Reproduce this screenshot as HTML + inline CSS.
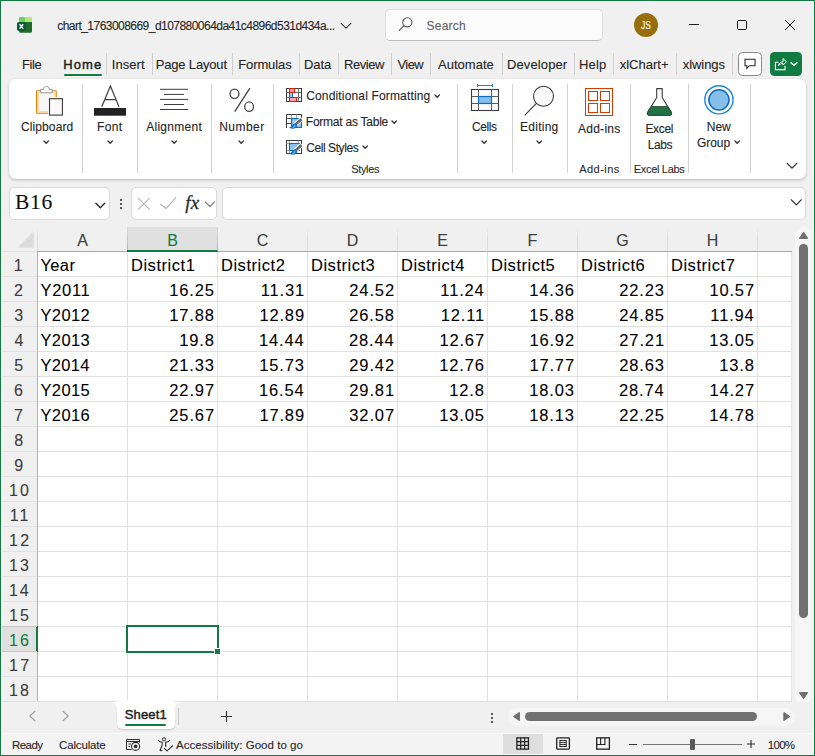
<!DOCTYPE html>
<html><head><meta charset="utf-8"><title>Excel</title>
<style>
html,body{margin:0;padding:0;}
body{width:815px;height:756px;position:relative;overflow:hidden;background:#f0f0f0;font-family:"Liberation Sans",sans-serif;}
#win{position:absolute;left:0;top:0;width:815px;height:756px;box-sizing:border-box;border:1px solid #107c41;box-shadow:inset 0 0 0 1px #f9f9f9;}
.t{position:absolute;white-space:pre;display:block;-webkit-text-stroke:0.1px currentColor;}
.b{position:absolute;display:block;}
</style></head><body>
<svg class="b" style="left:16px;top:16px" width="18" height="18" viewBox="0 0 18 18">
<rect x="3" y="1" width="6.2" height="5.5" rx="1" fill="#6dd162"/>
<rect x="9" y="1" width="7" height="5.5" rx="1" fill="#b2ea76"/>
<path d="M3 6 H16 V15.3 a1.5 1.5 0 0 1 -1.5 1.5 H4.5 a1.5 1.5 0 0 1 -1.5 -1.5 Z" fill="#1f6b2c"/>
<path d="M3 6 H9.2 V15 H3 Z" fill="#175c2a"/>
<rect x="1" y="5.9" width="8.8" height="8.9" rx="1.6" fill="#0f5a34"/>
<path d="M3.6 8.3 L7.2 12.6 M7.2 8.3 L3.6 12.6" stroke="#fff" stroke-width="1.4"/>
</svg>
<span class="t" style="left:57.22px;top:19px;font-size:12px;line-height:14px;letter-spacing:-0.535px;color:#242424;">chart_1763008669_d107880064da41c4896d531d434a...</span>
<svg class="b" style="left:339.7px;top:21px" width="12" height="10" viewBox="0 0 12 10"><path d="M1.1 2.3 L6 7.2 L10.9 2.3" fill="none" stroke="#333" stroke-width="1.1" stroke-linecap="round" stroke-linejoin="round"/></svg>
<div class="b" style="left:385px;top:9.4px;width:217.60px;height:31.20px;background:#fbfbfb;border:1px solid #dedede;border-bottom-color:#bcbcbc;border-radius:5px;box-sizing:border-box;"></div>
<svg class="b" style="left:398.1px;top:16.2px" width="16" height="16" viewBox="0 0 16 16"><circle cx="9.3" cy="6.3" r="4.6" fill="none" stroke="#555" stroke-width="1.1"/><path d="M6 9.6 L1.3 14.3" stroke="#555" stroke-width="1.2" stroke-linecap="round"/></svg>
<span class="t" style="left:426.46px;top:19px;font-size:12px;line-height:14px;letter-spacing:0.256px;color:#616161;">Search</span>
<div class="b" style="left:633.9px;top:12.8px;width:24.20px;height:24.20px;background:#966e0d;border-radius:50%;"></div>
<span class="t" style="left:640.80px;top:19px;font-size:11px;line-height:12px;letter-spacing:0.000px;color:#fff;transform:scaleX(0.76);transform-origin:0 0;">JS</span>
<svg class="b" style="left:688px;top:19px" width="12" height="12" viewBox="0 0 12 12"><path d="M1 5.5 H11" stroke="#1a1a1a" stroke-width="1"/></svg>
<svg class="b" style="left:736px;top:19px" width="12" height="12" viewBox="0 0 12 12"><rect x="1.5" y="1.5" width="9" height="9" rx="1.2" fill="none" stroke="#1a1a1a" stroke-width="1"/></svg>
<svg class="b" style="left:784px;top:19px" width="12" height="12" viewBox="0 0 12 12"><path d="M1 1 L11 11 M11 1 L1 11" stroke="#1a1a1a" stroke-width="1"/></svg>
<span class="t" style="left:21.96px;top:57px;font-size:13px;line-height:15px;letter-spacing:-0.373px;color:#242424;">File</span>
<span class="t" style="left:63.26px;top:57px;font-size:13px;line-height:15px;letter-spacing:1.105px;color:#1f1f1f;-webkit-text-stroke:0.45px #1f1f1f;">Home</span>
<span class="t" style="left:111.83px;top:57px;font-size:13px;line-height:15px;letter-spacing:0.034px;color:#242424;">Insert</span>
<span class="t" style="left:155.71px;top:57px;font-size:13px;line-height:15px;letter-spacing:-0.170px;color:#242424;">Page Layout</span>
<span class="t" style="left:238.21px;top:57px;font-size:13px;line-height:15px;letter-spacing:-0.102px;color:#242424;">Formulas</span>
<span class="t" style="left:303.96px;top:57px;font-size:13px;line-height:15px;letter-spacing:-0.068px;color:#242424;">Data</span>
<span class="t" style="left:343.96px;top:57px;font-size:13px;line-height:15px;letter-spacing:-0.420px;color:#242424;">Review</span>
<span class="t" style="left:397.50px;top:57px;font-size:13px;line-height:15px;letter-spacing:-0.567px;color:#242424;">View</span>
<span class="t" style="left:438.00px;top:57px;font-size:13px;line-height:15px;letter-spacing:0.019px;color:#242424;">Automate</span>
<span class="t" style="left:506.96px;top:57px;font-size:13px;line-height:15px;letter-spacing:0.119px;color:#242424;">Developer</span>
<span class="t" style="left:578.96px;top:57px;font-size:13px;line-height:15px;letter-spacing:0.215px;color:#242424;">Help</span>
<span class="t" style="left:619.67px;top:57px;font-size:13px;line-height:15px;letter-spacing:0.024px;color:#242424;">xlChart+</span>
<span class="t" style="left:682.87px;top:57px;font-size:13px;line-height:15px;letter-spacing:-0.092px;color:#242424;">xlwings</span>
<div class="b" style="left:105.75px;top:52.5px;width:1.00px;height:22.00px;background:#cfcfcf;"></div>
<div class="b" style="left:151.5px;top:52.5px;width:1.00px;height:22.00px;background:#cfcfcf;"></div>
<div class="b" style="left:232.0px;top:52.5px;width:1.00px;height:22.00px;background:#cfcfcf;"></div>
<div class="b" style="left:298.75px;top:52.5px;width:1.00px;height:22.00px;background:#cfcfcf;"></div>
<div class="b" style="left:337.75px;top:52.5px;width:1.00px;height:22.00px;background:#cfcfcf;"></div>
<div class="b" style="left:390.75px;top:52.5px;width:1.00px;height:22.00px;background:#cfcfcf;"></div>
<div class="b" style="left:430.0px;top:52.5px;width:1.00px;height:22.00px;background:#cfcfcf;"></div>
<div class="b" style="left:501.5px;top:52.5px;width:1.00px;height:22.00px;background:#cfcfcf;"></div>
<div class="b" style="left:573.75px;top:52.5px;width:1.00px;height:22.00px;background:#cfcfcf;"></div>
<div class="b" style="left:612.7px;top:52.5px;width:1.00px;height:22.00px;background:#cfcfcf;"></div>
<div class="b" style="left:676.0px;top:52.5px;width:1.00px;height:22.00px;background:#cfcfcf;"></div>
<div class="b" style="left:732.0px;top:52.5px;width:1.00px;height:22.00px;background:#cfcfcf;"></div>
<div class="b" style="left:64px;top:73.6px;width:37.50px;height:2.00px;background:#107c41;border-radius:1px;"></div>
<div class="b" style="left:738.1px;top:51.9px;width:23.60px;height:23.80px;background:#fff;border:1px solid #8a8a8a;border-radius:4.5px;box-sizing:border-box;"></div>
<svg class="b" style="left:743px;top:57px" width="14" height="14" viewBox="0 0 14 14"><path d="M2 2.3 H12 V8.7 H6.3 L3.9 11.3 V8.7 H2 Z" fill="none" stroke="#242424" stroke-width="1.05" stroke-linejoin="miter"/></svg>
<div class="b" style="left:770px;top:52px;width:32.00px;height:23.60px;background:#107c41;border-radius:4.5px;"></div>
<svg class="b" style="left:774px;top:56px" width="16" height="16" viewBox="0 0 16 16"><path d="M4.4 6.3 H1.4 V13.6 H11 V9.8" fill="none" stroke="#fff" stroke-width="1.1" stroke-linejoin="miter"/><path d="M4.2 10 C4.6 7.3 6.6 5.9 9 5.8 V2.6 L12.5 5.8 L9 9 V7.5 C7 7.5 5.4 8.2 4.2 10 Z" fill="none" stroke="#fff" stroke-width="1" stroke-linejoin="round"/></svg>
<svg class="b" style="left:790.4px;top:61.4px" width="8" height="6" viewBox="0 0 8 6"><path d="M1.1 1.7 L4 4.3 L6.9 1.7" fill="none" stroke="#fff" stroke-width="1.5" stroke-linecap="round" stroke-linejoin="round"/></svg>
<div class="b" style="left:9px;top:78.7px;width:797.00px;height:100.00px;background:#fff;border-radius:6.5px;box-shadow:0 1px 2.6px rgba(0,0,0,0.24);"></div>
<div class="b" style="left:82.0px;top:83.7px;width:1.00px;height:88.90px;background:#d1d1d1;"></div>
<div class="b" style="left:136.9px;top:83.7px;width:1.00px;height:88.90px;background:#d1d1d1;"></div>
<div class="b" style="left:211.0px;top:83.7px;width:1.00px;height:88.90px;background:#d1d1d1;"></div>
<div class="b" style="left:273.0px;top:83.7px;width:1.00px;height:88.90px;background:#d1d1d1;"></div>
<div class="b" style="left:457.1px;top:83.7px;width:1.00px;height:88.90px;background:#d1d1d1;"></div>
<div class="b" style="left:512.1px;top:83.7px;width:1.00px;height:88.90px;background:#d1d1d1;"></div>
<div class="b" style="left:566.8px;top:83.7px;width:1.00px;height:88.90px;background:#d1d1d1;"></div>
<div class="b" style="left:750.0px;top:83.7px;width:1.00px;height:88.90px;background:#d1d1d1;"></div>
<div class="b" style="left:630.4px;top:83.7px;width:1.00px;height:88.90px;background:#d1d1d1;"></div>
<div class="b" style="left:688.1px;top:83.7px;width:1.00px;height:88.90px;background:#d1d1d1;"></div>
<svg class="b" style="left:35px;top:85px" width="30" height="32" viewBox="0 0 30 32">
<rect x="1.6" y="5.7" width="19.6" height="22.5" rx="0.8" fill="#f7f7f7" stroke="#e07a00" stroke-width="1.1"/>
<rect x="2.9" y="7" width="17" height="19.9" fill="none" stroke="#fbd599" stroke-width="1.5"/>
<path d="M5.7 7.8 V4.4 H8.6 C8.6 2.4 10 1.4 11.4 1.4 C12.8 1.4 14.2 2.4 14.2 4.4 H17.1 V7.8 Z" fill="#fff" stroke="#8a8a8a" stroke-width="0.9" stroke-linejoin="round"/>
<rect x="13.2" y="12.4" width="15.6" height="19" fill="#fff"/>
<rect x="14.5" y="13.7" width="12.9" height="16.4" fill="#fafafa" stroke="#3b3b3b" stroke-width="1.1"/>
</svg>
<span class="t" style="left:20.90px;top:120px;font-size:12px;line-height:14px;letter-spacing:0.120px;color:#242424;">Clipboard</span>
<svg class="b" style="left:43.3px;top:140.3px" width="6.4" height="4.2" viewBox="0 0 6.4 4.2"><path d="M1 1 L3.2 3.2 L5.4 1" fill="none" stroke="#333" stroke-width="1.3" stroke-linecap="round" stroke-linejoin="round"/></svg>
<svg class="b" style="left:93px;top:85px" width="34" height="32" viewBox="0 0 34 32">
<path d="M8.8 21.7 L17.4 1 L26 21.7 M11.75 14.6 H23.05" fill="none" stroke="#444" stroke-width="1.25" stroke-linejoin="miter"/>
<rect x="1" y="23" width="32" height="7.7" fill="#222"/>
</svg>
<span class="t" style="left:97.04px;top:120px;font-size:12px;line-height:14px;letter-spacing:0.320px;color:#242424;">Font</span>
<svg class="b" style="left:106.8px;top:140.3px" width="6.4" height="4.2" viewBox="0 0 6.4 4.2"><path d="M1 1 L3.2 3.2 L5.4 1" fill="none" stroke="#333" stroke-width="1.3" stroke-linecap="round" stroke-linejoin="round"/></svg>
<svg class="b" style="left:159px;top:87px" width="30" height="24" viewBox="0 0 30 24">
<path d="M1 2.3 H29 M5 7.4 H25 M1 12.4 H29 M5 17.5 H25 M1 22.5 H29" stroke="#3b3b3b" stroke-width="1"/>
</svg>
<span class="t" style="left:146.20px;top:120px;font-size:12px;line-height:14px;letter-spacing:0.283px;color:#242424;">Alignment</span>
<svg class="b" style="left:170.8px;top:140.3px" width="6.4" height="4.2" viewBox="0 0 6.4 4.2"><path d="M1 1 L3.2 3.2 L5.4 1" fill="none" stroke="#333" stroke-width="1.3" stroke-linecap="round" stroke-linejoin="round"/></svg>
<svg class="b" style="left:228px;top:86px" width="28" height="28" viewBox="0 0 28 28">
<ellipse cx="6.5" cy="7.8" rx="4.4" ry="4.75" fill="none" stroke="#444" stroke-width="1.3"/>
<ellipse cx="21.1" cy="20.7" rx="4.4" ry="4.75" fill="none" stroke="#444" stroke-width="1.3"/>
<path d="M21.9 2.1 L6.7 25.7" stroke="#444" stroke-width="1.3"/>
</svg>
<span class="t" style="left:219.24px;top:120px;font-size:12px;line-height:14px;letter-spacing:0.444px;color:#242424;">Number</span>
<svg class="b" style="left:237.8px;top:140.3px" width="6.4" height="4.2" viewBox="0 0 6.4 4.2"><path d="M1 1 L3.2 3.2 L5.4 1" fill="none" stroke="#333" stroke-width="1.3" stroke-linecap="round" stroke-linejoin="round"/></svg>
<svg class="b" style="left:285px;top:87px" width="18" height="16" viewBox="0 0 18 16">
<rect x="1.5" y="1.5" width="15" height="13" fill="#fff" stroke="#3b3b3b" stroke-width="1"/>
<path d="M4.5 1.5 V14.5 M13.5 1.5 V14.5 M1.5 5.5 H16.5 M1.5 10.5 H16.5" stroke="#6a6a6a" stroke-width="1"/>
<rect x="5" y="6" width="3" height="4" fill="#8fd0ff"/>
<path d="M4.5 5.5 V10.5 M7.5 5.5 V10.5" stroke="#0f6cbd" stroke-width="1"/>
<rect x="4.5" y="1.5" width="5" height="4" fill="#ff9aa8" stroke="#e3180f" stroke-width="1"/>
<rect x="4.5" y="10.5" width="7" height="4" fill="#ff9aa8" stroke="#e3180f" stroke-width="1"/>
</svg>
<span class="t" style="left:306.20px;top:89px;font-size:12px;line-height:14px;letter-spacing:0.157px;color:#242424;">Conditional Formatting</span>
<svg class="b" style="left:433.5px;top:93.60000000000001px" width="6.4" height="4.2" viewBox="0 0 6.4 4.2"><path d="M1 1 L3.2 3.2 L5.4 1" fill="none" stroke="#333" stroke-width="1.3" stroke-linecap="round" stroke-linejoin="round"/></svg>
<svg class="b" style="left:285px;top:113px" width="18" height="16" viewBox="0 0 18 16">
<path d="M1.5 15 V1.5 H16.5 V4.6" fill="none" stroke="#3b3b3b" stroke-width="1"/>
<path d="M1.5 5.5 H6 M1.5 10.5 H6" stroke="#3b3b3b" stroke-width="0.9"/>
<path d="M6.5 1.5 V5 M11.5 1.5 V5" stroke="#8a8a8a" stroke-width="0.8"/>
<rect x="6.5" y="5.5" width="10" height="9" fill="#8ec4f4" stroke="#0f6cbd" stroke-width="1.1"/>
<path d="M17 5.6 L9.4 12.4" stroke="#fff" stroke-width="4.6"/>
<path d="M16.5 6.2 L10.6 11.4" stroke="#4a4a4a" stroke-width="2.5"/>
<path d="M16.3 6.6 L10.9 11.4" stroke="#fff" stroke-width="0.7" stroke-dasharray="0.8 0.8"/>
<path d="M10.3 10.2 C7.8 10 8 13.4 3.6 14.6 C6.5 16.4 11.6 16 12.4 12.4 Z" fill="#0f6cbd"/>
<path d="M9.6 11.6 C8.6 12.6 8.4 14 6.6 14.8 C8.6 15.2 10.6 14.4 11 12.8 Z" fill="#5aa6e8"/>
</svg>
<span class="t" style="left:305.84px;top:115px;font-size:12px;line-height:14px;letter-spacing:-0.240px;color:#242424;">Format as Table</span>
<svg class="b" style="left:391.3px;top:119.60000000000001px" width="6.4" height="4.2" viewBox="0 0 6.4 4.2"><path d="M1 1 L3.2 3.2 L5.4 1" fill="none" stroke="#333" stroke-width="1.3" stroke-linecap="round" stroke-linejoin="round"/></svg>
<svg class="b" style="left:285px;top:139px" width="18" height="16" viewBox="0 0 18 16">
<rect x="1.5" y="1.5" width="15" height="13" fill="#fff" stroke="#3b3b3b" stroke-width="1"/>
<path d="M4.4 1.5 V4.4 M13.4 1.5 V4.4 M1.5 4.4 H4.4 M1.5 11.5 H4.4 M4.4 11.5 V14.5" stroke="#8a8a8a" stroke-width="0.8"/>
<rect x="4.5" y="4.5" width="10" height="7" fill="#8ec4f4" stroke="#0f6cbd" stroke-width="1.1"/>
<path d="M17 5.6 L9.4 12.4" stroke="#fff" stroke-width="4.6"/>
<path d="M16.5 6.2 L10.6 11.4" stroke="#4a4a4a" stroke-width="2.5"/>
<path d="M16.3 6.6 L10.9 11.4" stroke="#fff" stroke-width="0.7" stroke-dasharray="0.8 0.8"/>
<path d="M10.3 10.2 C7.8 10 8 13.4 3.6 14.6 C6.5 16.4 11.6 16 12.4 12.4 Z" fill="#0f6cbd"/>
<path d="M9.6 11.6 C8.6 12.6 8.4 14 6.6 14.8 C8.6 15.2 10.6 14.4 11 12.8 Z" fill="#5aa6e8"/>
</svg>
<span class="t" style="left:306.20px;top:141px;font-size:12px;line-height:14px;letter-spacing:-0.418px;color:#242424;">Cell Styles</span>
<svg class="b" style="left:362.2px;top:145.3px" width="6.4" height="4.2" viewBox="0 0 6.4 4.2"><path d="M1 1 L3.2 3.2 L5.4 1" fill="none" stroke="#333" stroke-width="1.3" stroke-linecap="round" stroke-linejoin="round"/></svg>
<span class="t" style="left:351.20px;top:163px;font-size:11px;line-height:12px;letter-spacing:-0.319px;color:#2b2b2b;">Styles</span>
<svg class="b" style="left:469px;top:83px" width="32" height="29" viewBox="0 0 32 29">
<path d="M8.5 2.5 H23.5 M8.5 0.9 V4.1 M23.5 0.9 V4.1" stroke="#1a86d6" stroke-width="1"/>
<rect x="2.5" y="6.5" width="27" height="21" fill="#fcfcfc" stroke="#3b3b3b" stroke-width="1.1"/>
<path d="M9.5 6.5 V27.5 M22.5 6.5 V27.5 M2.5 13.5 H29.5 M2.5 20.5 H29.5" stroke="#5a5a5a" stroke-width="1"/>
<rect x="9.5" y="13.5" width="13" height="7" fill="#85bfea" stroke="#0f6cbd" stroke-width="1.2"/>
</svg>
<span class="t" style="left:472.00px;top:120px;font-size:12px;line-height:14px;letter-spacing:-0.420px;color:#242424;">Cells</span>
<svg class="b" style="left:480.8px;top:140.3px" width="6.4" height="4.2" viewBox="0 0 6.4 4.2"><path d="M1 1 L3.2 3.2 L5.4 1" fill="none" stroke="#333" stroke-width="1.3" stroke-linecap="round" stroke-linejoin="round"/></svg>
<svg class="b" style="left:522px;top:84px" width="34" height="33" viewBox="0 0 34 33">
<circle cx="21.5" cy="12.2" r="10" fill="#fafafa" stroke="#3b3b3b" stroke-width="1.1"/>
<path d="M14.2 19.6 L3.1 30.8" stroke="#3b3b3b" stroke-width="1.2" stroke-linecap="round"/>
</svg>
<span class="t" style="left:520.04px;top:120px;font-size:12px;line-height:14px;letter-spacing:0.253px;color:#242424;">Editing</span>
<svg class="b" style="left:535.8px;top:140.3px" width="6.4" height="4.2" viewBox="0 0 6.4 4.2"><path d="M1 1 L3.2 3.2 L5.4 1" fill="none" stroke="#333" stroke-width="1.3" stroke-linecap="round" stroke-linejoin="round"/></svg>
<svg class="b" style="left:584px;top:86px" width="31" height="32" viewBox="0 0 31 32">
<rect x="1.5" y="2.5" width="27" height="27" fill="none" stroke="#d83b01" stroke-width="1"/>
<rect x="4.5" y="5.5" width="9" height="9" fill="none" stroke="#d83b01" stroke-width="1"/>
<rect x="16.5" y="5.5" width="9" height="9" fill="none" stroke="#d83b01" stroke-width="1"/>
<rect x="4.5" y="17.5" width="9" height="9" fill="none" stroke="#d83b01" stroke-width="1"/>
<rect x="16.5" y="17.5" width="9" height="9" fill="none" stroke="#d83b01" stroke-width="1"/>
</svg>
<span class="t" style="left:578.00px;top:122px;font-size:12px;line-height:14px;letter-spacing:0.257px;color:#242424;">Add-ins</span>
<span class="t" style="left:579.30px;top:163px;font-size:11px;line-height:12px;letter-spacing:0.432px;color:#2b2b2b;">Add-ins</span>
<svg class="b" style="left:645px;top:86px" width="30" height="31" viewBox="0 0 30 31">
<path d="M11.7 2.6 H17.2 V11.5 L26.3 26.4 a1.9 1.9 0 0 1 -1.6 2.9 H4.2 a1.9 1.9 0 0 1 -1.6 -2.9 L11.7 11.5 Z" fill="#fff" stroke="#3b3b3b" stroke-width="1.1" stroke-linejoin="round"/>
<path d="M6.14 20.6 H22.76 L26.3 26.4 a1.9 1.9 0 0 1 -1.6 2.9 H4.2 a1.9 1.9 0 0 1 -1.6 -2.9 Z" fill="#217346" stroke="#2a4a36" stroke-width="0.9" stroke-linejoin="round"/>
</svg>
<span class="t" style="left:645.44px;top:122px;font-size:12px;line-height:14px;letter-spacing:-0.340px;color:#242424;">Excel</span>
<span class="t" style="left:647.64px;top:138px;font-size:12px;line-height:14px;letter-spacing:-0.420px;color:#242424;">Labs</span>
<span class="t" style="left:633.72px;top:163px;font-size:11px;line-height:12px;letter-spacing:-0.303px;color:#2b2b2b;">Excel Labs</span>
<svg class="b" style="left:703px;top:84px" width="32" height="32" viewBox="0 0 32 32">
<circle cx="15.95" cy="15.8" r="14.1" fill="#fff" stroke="#1a86d6" stroke-width="1.4"/>
<circle cx="15.95" cy="15.8" r="10.1" fill="#85bfea" stroke="#0f6cbd" stroke-width="1.5"/>
</svg>
<span class="t" style="left:706.84px;top:120px;font-size:12px;line-height:14px;letter-spacing:-0.050px;color:#242424;">New</span>
<span class="t" style="left:697.10px;top:136px;font-size:12px;line-height:14px;letter-spacing:-0.095px;color:#242424;">Group</span>
<svg class="b" style="left:734.0999999999999px;top:139.70000000000002px" width="6.4" height="4.2" viewBox="0 0 6.4 4.2"><path d="M1 1 L3.2 3.2 L5.4 1" fill="none" stroke="#333" stroke-width="1.3" stroke-linecap="round" stroke-linejoin="round"/></svg>
<svg class="b" style="left:784.8px;top:160.6px" width="14" height="10" viewBox="0 0 14 10"><path d="M2.2 2.4 L7 7.1 L11.8 2.4" fill="none" stroke="#2b2b2b" stroke-width="1.3" stroke-linecap="round" stroke-linejoin="round"/></svg>
<div class="b" style="left:9.3px;top:187.2px;width:101.00px;height:32.50px;background:#fff;border:1px solid #d9d9d9;border-radius:5px;box-sizing:border-box;"></div>
<span class="t" style="left:15.06px;top:190px;font-size:21.5px;line-height:24px;letter-spacing:0.639px;color:#111;font-family:'Liberation Serif',serif;">B16</span>
<svg class="b" style="left:94px;top:200px" width="13" height="11" viewBox="0 0 13 11"><path d="M1.9 3.2 L6.3 7.7 L10.7 3.2" fill="none" stroke="#2b2b2b" stroke-width="1.4" stroke-linecap="round" stroke-linejoin="round"/></svg>
<div class="b" style="left:120.2px;top:198.8px;width:2.30px;height:2.20px;background:#3a3a3a;border-radius:35%;"></div>
<div class="b" style="left:120.2px;top:202.8px;width:2.30px;height:2.20px;background:#3a3a3a;border-radius:35%;"></div>
<div class="b" style="left:120.2px;top:206.9px;width:2.30px;height:2.20px;background:#3a3a3a;border-radius:35%;"></div>
<div class="b" style="left:131px;top:187.2px;width:85.60px;height:32.50px;background:#fff;border:1px solid #d9d9d9;border-radius:5px;box-sizing:border-box;"></div>
<svg class="b" style="left:137px;top:197px" width="14" height="13" viewBox="0 0 14 13"><path d="M1.2 1.1 L12.6 12.3 M12.6 1.1 L1.2 12.3" stroke="#b3b3b3" stroke-width="1.1"/></svg>
<svg class="b" style="left:159px;top:196px" width="19" height="14" viewBox="0 0 19 14"><path d="M1.3 8 L7 12.4 L17 1.6" fill="none" stroke="#b3b3b3" stroke-width="1.1"/></svg>
<span class="t" style="left:185.3px;top:192px;font-family:'Liberation Serif',serif;font-style:italic;font-size:19px;line-height:21px;color:#2b2b2b;letter-spacing:0.2px;-webkit-text-stroke:0.3px #2b2b2b">fx</span>
<svg class="b" style="left:203.5px;top:200px" width="12" height="8" viewBox="0 0 12 8"><path d="M1.2 1.8 L5.9 6.5 L10.6 1.8" fill="none" stroke="#7a7a7a" stroke-width="1.1" stroke-linecap="round" stroke-linejoin="round"/></svg>
<div class="b" style="left:221.5px;top:187.2px;width:584.30px;height:32.50px;background:#fff;border:1px solid #d9d9d9;border-radius:5px;box-sizing:border-box;"></div>
<svg class="b" style="left:790px;top:197px" width="12" height="10" viewBox="0 0 12 10"><path d="M1.4 2.8 L6.3 7.9 L11.2 2.8" fill="none" stroke="#2b2b2b" stroke-width="1.2" stroke-linecap="round" stroke-linejoin="round"/></svg>
<div class="b" style="left:38px;top:252px;width:754.00px;height:450.00px;background:#fff;"></div>
<div class="b" style="left:128px;top:227px;width:89.00px;height:24.00px;background:#e0e0e0;"></div>
<div class="b" style="left:127px;top:227px;width:1.00px;height:24.00px;background:linear-gradient(#dcdcdc,#b4b4b4);"></div>
<div class="b" style="left:127px;top:250px;width:91.00px;height:2.00px;background:#107c41;"></div>
<div class="b" style="left:37px;top:251px;width:90.00px;height:1.00px;background:#a8a8a8;"></div>
<div class="b" style="left:218px;top:251px;width:574.00px;height:1.00px;background:#a8a8a8;"></div>
<div class="b" style="left:2px;top:251px;width:35.00px;height:1.00px;background:#e2e2e2;"></div>
<div class="b" style="left:37px;top:252px;width:1.00px;height:449.00px;background:#b4b4b4;"></div>
<div class="b" style="left:37px;top:227px;width:1.00px;height:24.00px;background:linear-gradient(#f0f0f0,#dcdcdc 50%);"></div>
<div class="b" style="left:1px;top:627px;width:35.00px;height:24.00px;background:#e0e0e0;"></div>
<div class="b" style="left:36px;top:626px;width:2.00px;height:26.00px;background:#107c41;"></div>
<svg class="b" style="left:17px;top:231px" width="18" height="18" viewBox="0 0 18 18"><path d="M16.8 0.2 V16.8 H0.5 Z" fill="#dcdcdc"/></svg>
<div class="b" style="left:2px;top:276px;width:35.00px;height:1.00px;background:#e2e2e2;"></div>
<div class="b" style="left:38px;top:276px;width:754.00px;height:1.00px;background:#e1e1e1;"></div>
<div class="b" style="left:2px;top:301px;width:35.00px;height:1.00px;background:#e2e2e2;"></div>
<div class="b" style="left:38px;top:301px;width:754.00px;height:1.00px;background:#e1e1e1;"></div>
<div class="b" style="left:2px;top:326px;width:35.00px;height:1.00px;background:#e2e2e2;"></div>
<div class="b" style="left:38px;top:326px;width:754.00px;height:1.00px;background:#e1e1e1;"></div>
<div class="b" style="left:2px;top:351px;width:35.00px;height:1.00px;background:#e2e2e2;"></div>
<div class="b" style="left:38px;top:351px;width:754.00px;height:1.00px;background:#e1e1e1;"></div>
<div class="b" style="left:2px;top:376px;width:35.00px;height:1.00px;background:#e2e2e2;"></div>
<div class="b" style="left:38px;top:376px;width:754.00px;height:1.00px;background:#e1e1e1;"></div>
<div class="b" style="left:2px;top:401px;width:35.00px;height:1.00px;background:#e2e2e2;"></div>
<div class="b" style="left:38px;top:401px;width:754.00px;height:1.00px;background:#e1e1e1;"></div>
<div class="b" style="left:2px;top:426px;width:35.00px;height:1.00px;background:#e2e2e2;"></div>
<div class="b" style="left:38px;top:426px;width:754.00px;height:1.00px;background:#e1e1e1;"></div>
<div class="b" style="left:2px;top:451px;width:35.00px;height:1.00px;background:#e2e2e2;"></div>
<div class="b" style="left:38px;top:451px;width:754.00px;height:1.00px;background:#e1e1e1;"></div>
<div class="b" style="left:2px;top:476px;width:35.00px;height:1.00px;background:#e2e2e2;"></div>
<div class="b" style="left:38px;top:476px;width:754.00px;height:1.00px;background:#e1e1e1;"></div>
<div class="b" style="left:2px;top:501px;width:35.00px;height:1.00px;background:#e2e2e2;"></div>
<div class="b" style="left:38px;top:501px;width:754.00px;height:1.00px;background:#e1e1e1;"></div>
<div class="b" style="left:2px;top:526px;width:35.00px;height:1.00px;background:#e2e2e2;"></div>
<div class="b" style="left:38px;top:526px;width:754.00px;height:1.00px;background:#e1e1e1;"></div>
<div class="b" style="left:2px;top:551px;width:35.00px;height:1.00px;background:#e2e2e2;"></div>
<div class="b" style="left:38px;top:551px;width:754.00px;height:1.00px;background:#e1e1e1;"></div>
<div class="b" style="left:2px;top:576px;width:35.00px;height:1.00px;background:#e2e2e2;"></div>
<div class="b" style="left:38px;top:576px;width:754.00px;height:1.00px;background:#e1e1e1;"></div>
<div class="b" style="left:2px;top:601px;width:35.00px;height:1.00px;background:#e2e2e2;"></div>
<div class="b" style="left:38px;top:601px;width:754.00px;height:1.00px;background:#e1e1e1;"></div>
<div class="b" style="left:2px;top:626px;width:35.00px;height:1.00px;background:#e2e2e2;"></div>
<div class="b" style="left:38px;top:626px;width:754.00px;height:1.00px;background:#e1e1e1;"></div>
<div class="b" style="left:2px;top:651px;width:35.00px;height:1.00px;background:#e2e2e2;"></div>
<div class="b" style="left:38px;top:651px;width:754.00px;height:1.00px;background:#e1e1e1;"></div>
<div class="b" style="left:2px;top:676px;width:35.00px;height:1.00px;background:#e2e2e2;"></div>
<div class="b" style="left:38px;top:676px;width:754.00px;height:1.00px;background:#e1e1e1;"></div>
<div class="b" style="left:2px;top:701px;width:35.00px;height:1.00px;background:#e2e2e2;"></div>
<div class="b" style="left:38px;top:701px;width:754.00px;height:1.00px;background:#e1e1e1;"></div>
<div class="b" style="left:127px;top:252px;width:1.00px;height:450.00px;background:#e1e1e1;"></div>
<div class="b" style="left:217px;top:252px;width:1.00px;height:450.00px;background:#e1e1e1;"></div>
<div class="b" style="left:307px;top:252px;width:1.00px;height:450.00px;background:#e1e1e1;"></div>
<div class="b" style="left:307px;top:227px;width:1.00px;height:24.00px;background:linear-gradient(#f0f0f0,#dcdcdc 50%);"></div>
<div class="b" style="left:397px;top:252px;width:1.00px;height:450.00px;background:#e1e1e1;"></div>
<div class="b" style="left:397px;top:227px;width:1.00px;height:24.00px;background:linear-gradient(#f0f0f0,#dcdcdc 50%);"></div>
<div class="b" style="left:487px;top:252px;width:1.00px;height:450.00px;background:#e1e1e1;"></div>
<div class="b" style="left:487px;top:227px;width:1.00px;height:24.00px;background:linear-gradient(#f0f0f0,#dcdcdc 50%);"></div>
<div class="b" style="left:577px;top:252px;width:1.00px;height:450.00px;background:#e1e1e1;"></div>
<div class="b" style="left:577px;top:227px;width:1.00px;height:24.00px;background:linear-gradient(#f0f0f0,#dcdcdc 50%);"></div>
<div class="b" style="left:667px;top:252px;width:1.00px;height:450.00px;background:#e1e1e1;"></div>
<div class="b" style="left:667px;top:227px;width:1.00px;height:24.00px;background:linear-gradient(#f0f0f0,#dcdcdc 50%);"></div>
<div class="b" style="left:757px;top:252px;width:1.00px;height:450.00px;background:#e1e1e1;"></div>
<div class="b" style="left:757px;top:227px;width:1.00px;height:24.00px;background:linear-gradient(#f0f0f0,#dcdcdc 50%);"></div>
<div class="b" style="left:791px;top:252px;width:1.00px;height:450.00px;background:#e4e4e4;"></div>
<div class="b" style="left:1px;top:626px;width:35.00px;height:1.00px;background:#c6c6c6;"></div>
<div class="b" style="left:1px;top:651px;width:35.00px;height:1.00px;background:#c6c6c6;"></div>
<div class="b" style="left:217px;top:227px;width:1.00px;height:24.00px;background:linear-gradient(#dcdcdc,#b4b4b4);"></div>
<span class="t" style="left:77.16px;top:232px;font-size:16px;line-height:17px;letter-spacing:0.000px;color:#3d3d3d;">A</span>
<span class="t" style="left:167.16px;top:232px;font-size:16px;line-height:17px;letter-spacing:0.000px;color:#107c41;">B</span>
<span class="t" style="left:256.72px;top:232px;font-size:16px;line-height:17px;letter-spacing:0.000px;color:#3d3d3d;">C</span>
<span class="t" style="left:346.72px;top:232px;font-size:16px;line-height:17px;letter-spacing:0.000px;color:#3d3d3d;">D</span>
<span class="t" style="left:437.16px;top:232px;font-size:16px;line-height:17px;letter-spacing:0.000px;color:#3d3d3d;">E</span>
<span class="t" style="left:527.61px;top:232px;font-size:16px;line-height:17px;letter-spacing:0.000px;color:#3d3d3d;">F</span>
<span class="t" style="left:616.28px;top:232px;font-size:16px;line-height:17px;letter-spacing:0.000px;color:#3d3d3d;">G</span>
<span class="t" style="left:706.72px;top:232px;font-size:16px;line-height:17px;letter-spacing:0.000px;color:#3d3d3d;">H</span>
<span class="t" style="left:13.65px;top:257px;font-size:16px;line-height:17px;letter-spacing:1.939px;color:#3d3d3d;">1</span>
<span class="t" style="left:14.05px;top:282px;font-size:16px;line-height:17px;letter-spacing:1.539px;color:#3d3d3d;">2</span>
<span class="t" style="left:14.29px;top:307px;font-size:16px;line-height:17px;letter-spacing:1.219px;color:#3d3d3d;">3</span>
<span class="t" style="left:14.53px;top:332px;font-size:16px;line-height:17px;letter-spacing:0.739px;color:#3d3d3d;">4</span>
<span class="t" style="left:14.21px;top:357px;font-size:16px;line-height:17px;letter-spacing:1.299px;color:#3d3d3d;">5</span>
<span class="t" style="left:14.05px;top:382px;font-size:16px;line-height:17px;letter-spacing:1.459px;color:#3d3d3d;">6</span>
<span class="t" style="left:14.05px;top:407px;font-size:16px;line-height:17px;letter-spacing:1.539px;color:#3d3d3d;">7</span>
<span class="t" style="left:14.21px;top:432px;font-size:16px;line-height:17px;letter-spacing:1.299px;color:#3d3d3d;">8</span>
<span class="t" style="left:14.13px;top:457px;font-size:16px;line-height:17px;letter-spacing:1.459px;color:#3d3d3d;">9</span>
<span class="t" style="left:9.10px;top:482px;font-size:16px;line-height:17px;letter-spacing:1.997px;color:#3d3d3d;">10</span>
<span class="t" style="left:9.70px;top:507px;font-size:16px;line-height:17px;letter-spacing:2.170px;color:#3d3d3d;">11</span>
<span class="t" style="left:9.10px;top:532px;font-size:16px;line-height:17px;letter-spacing:2.157px;color:#3d3d3d;">12</span>
<span class="t" style="left:9.10px;top:557px;font-size:16px;line-height:17px;letter-spacing:2.077px;color:#3d3d3d;">13</span>
<span class="t" style="left:9.10px;top:582px;font-size:16px;line-height:17px;letter-spacing:1.837px;color:#3d3d3d;">14</span>
<span class="t" style="left:9.10px;top:607px;font-size:16px;line-height:17px;letter-spacing:2.077px;color:#3d3d3d;">15</span>
<span class="t" style="left:9.10px;top:632px;font-size:16px;line-height:17px;letter-spacing:2.077px;color:#107c41;">16</span>
<span class="t" style="left:9.10px;top:657px;font-size:16px;line-height:17px;letter-spacing:2.157px;color:#3d3d3d;">17</span>
<span class="t" style="left:9.10px;top:682px;font-size:16px;line-height:17px;letter-spacing:2.077px;color:#3d3d3d;">18</span>
<span class="t" style="left:40.47px;top:256px;font-size:16.5px;line-height:18px;letter-spacing:0.355px;color:#000;-webkit-text-stroke:0.08px #000;">Year</span>
<span class="t" style="left:130.98px;top:256px;font-size:16.5px;line-height:18px;letter-spacing:0.537px;color:#000;-webkit-text-stroke:0.08px #000;">District1</span>
<span class="t" style="left:220.98px;top:256px;font-size:16.5px;line-height:18px;letter-spacing:0.537px;color:#000;-webkit-text-stroke:0.08px #000;">District2</span>
<span class="t" style="left:310.98px;top:256px;font-size:16.5px;line-height:18px;letter-spacing:0.527px;color:#000;-webkit-text-stroke:0.08px #000;">District3</span>
<span class="t" style="left:400.98px;top:256px;font-size:16.5px;line-height:18px;letter-spacing:0.496px;color:#000;-webkit-text-stroke:0.08px #000;">District4</span>
<span class="t" style="left:490.98px;top:256px;font-size:16.5px;line-height:18px;letter-spacing:0.527px;color:#000;-webkit-text-stroke:0.08px #000;">District5</span>
<span class="t" style="left:580.98px;top:256px;font-size:16.5px;line-height:18px;letter-spacing:0.527px;color:#000;-webkit-text-stroke:0.08px #000;">District6</span>
<span class="t" style="left:670.98px;top:256px;font-size:16.5px;line-height:18px;letter-spacing:0.537px;color:#000;-webkit-text-stroke:0.08px #000;">District7</span>
<span class="t" style="left:40.47px;top:281px;font-size:16.5px;line-height:18px;letter-spacing:0.706px;color:#000;-webkit-text-stroke:0.08px #000;">Y2011</span>
<span class="t" style="left:169.29px;top:281px;font-size:16.5px;line-height:18px;letter-spacing:0.856px;color:#000;-webkit-text-stroke:0.08px #000;">16.25</span>
<span class="t" style="left:260.72px;top:281px;font-size:16.5px;line-height:18px;letter-spacing:0.827px;color:#000;-webkit-text-stroke:0.08px #000;">11.31</span>
<span class="t" style="left:349.34px;top:281px;font-size:16.5px;line-height:18px;letter-spacing:0.863px;color:#000;-webkit-text-stroke:0.08px #000;">24.52</span>
<span class="t" style="left:440.36px;top:281px;font-size:16.5px;line-height:18px;letter-spacing:0.834px;color:#000;-webkit-text-stroke:0.08px #000;">11.24</span>
<span class="t" style="left:529.29px;top:281px;font-size:16.5px;line-height:18px;letter-spacing:0.856px;color:#000;-webkit-text-stroke:0.08px #000;">14.36</span>
<span class="t" style="left:619.25px;top:281px;font-size:16.5px;line-height:18px;letter-spacing:0.865px;color:#000;-webkit-text-stroke:0.08px #000;">22.23</span>
<span class="t" style="left:709.38px;top:281px;font-size:16.5px;line-height:18px;letter-spacing:0.854px;color:#000;-webkit-text-stroke:0.08px #000;">10.57</span>
<span class="t" style="left:40.47px;top:306px;font-size:16.5px;line-height:18px;letter-spacing:0.397px;color:#000;-webkit-text-stroke:0.08px #000;">Y2012</span>
<span class="t" style="left:169.29px;top:306px;font-size:16.5px;line-height:18px;letter-spacing:0.856px;color:#000;-webkit-text-stroke:0.08px #000;">17.88</span>
<span class="t" style="left:259.38px;top:306px;font-size:16.5px;line-height:18px;letter-spacing:0.854px;color:#000;-webkit-text-stroke:0.08px #000;">12.89</span>
<span class="t" style="left:349.25px;top:306px;font-size:16.5px;line-height:18px;letter-spacing:0.865px;color:#000;-webkit-text-stroke:0.08px #000;">26.58</span>
<span class="t" style="left:440.72px;top:306px;font-size:16.5px;line-height:18px;letter-spacing:0.827px;color:#000;-webkit-text-stroke:0.08px #000;">12.11</span>
<span class="t" style="left:529.29px;top:306px;font-size:16.5px;line-height:18px;letter-spacing:0.856px;color:#000;-webkit-text-stroke:0.08px #000;">15.88</span>
<span class="t" style="left:619.25px;top:306px;font-size:16.5px;line-height:18px;letter-spacing:0.865px;color:#000;-webkit-text-stroke:0.08px #000;">24.85</span>
<span class="t" style="left:710.36px;top:306px;font-size:16.5px;line-height:18px;letter-spacing:0.834px;color:#000;-webkit-text-stroke:0.08px #000;">11.94</span>
<span class="t" style="left:40.47px;top:331px;font-size:16.5px;line-height:18px;letter-spacing:0.376px;color:#000;-webkit-text-stroke:0.08px #000;">Y2013</span>
<span class="t" style="left:179.24px;top:331px;font-size:16.5px;line-height:18px;letter-spacing:0.876px;color:#000;-webkit-text-stroke:0.08px #000;">19.8</span>
<span class="t" style="left:259.02px;top:331px;font-size:16.5px;line-height:18px;letter-spacing:0.861px;color:#000;-webkit-text-stroke:0.08px #000;">14.44</span>
<span class="t" style="left:348.98px;top:331px;font-size:16.5px;line-height:18px;letter-spacing:0.870px;color:#000;-webkit-text-stroke:0.08px #000;">28.44</span>
<span class="t" style="left:439.38px;top:331px;font-size:16.5px;line-height:18px;letter-spacing:0.854px;color:#000;-webkit-text-stroke:0.08px #000;">12.67</span>
<span class="t" style="left:529.38px;top:331px;font-size:16.5px;line-height:18px;letter-spacing:0.854px;color:#000;-webkit-text-stroke:0.08px #000;">16.92</span>
<span class="t" style="left:619.34px;top:331px;font-size:16.5px;line-height:18px;letter-spacing:0.863px;color:#000;-webkit-text-stroke:0.08px #000;">27.21</span>
<span class="t" style="left:709.29px;top:331px;font-size:16.5px;line-height:18px;letter-spacing:0.856px;color:#000;-webkit-text-stroke:0.08px #000;">13.05</span>
<span class="t" style="left:40.47px;top:356px;font-size:16.5px;line-height:18px;letter-spacing:0.314px;color:#000;-webkit-text-stroke:0.08px #000;">Y2014</span>
<span class="t" style="left:169.25px;top:356px;font-size:16.5px;line-height:18px;letter-spacing:0.865px;color:#000;-webkit-text-stroke:0.08px #000;">21.33</span>
<span class="t" style="left:259.29px;top:356px;font-size:16.5px;line-height:18px;letter-spacing:0.856px;color:#000;-webkit-text-stroke:0.08px #000;">15.73</span>
<span class="t" style="left:349.34px;top:356px;font-size:16.5px;line-height:18px;letter-spacing:0.863px;color:#000;-webkit-text-stroke:0.08px #000;">29.42</span>
<span class="t" style="left:439.29px;top:356px;font-size:16.5px;line-height:18px;letter-spacing:0.856px;color:#000;-webkit-text-stroke:0.08px #000;">12.76</span>
<span class="t" style="left:529.38px;top:356px;font-size:16.5px;line-height:18px;letter-spacing:0.854px;color:#000;-webkit-text-stroke:0.08px #000;">17.77</span>
<span class="t" style="left:619.25px;top:356px;font-size:16.5px;line-height:18px;letter-spacing:0.865px;color:#000;-webkit-text-stroke:0.08px #000;">28.63</span>
<span class="t" style="left:719.24px;top:356px;font-size:16.5px;line-height:18px;letter-spacing:0.876px;color:#000;-webkit-text-stroke:0.08px #000;">13.8</span>
<span class="t" style="left:40.47px;top:381px;font-size:16.5px;line-height:18px;letter-spacing:0.376px;color:#000;-webkit-text-stroke:0.08px #000;">Y2015</span>
<span class="t" style="left:169.34px;top:381px;font-size:16.5px;line-height:18px;letter-spacing:0.863px;color:#000;-webkit-text-stroke:0.08px #000;">22.97</span>
<span class="t" style="left:259.02px;top:381px;font-size:16.5px;line-height:18px;letter-spacing:0.861px;color:#000;-webkit-text-stroke:0.08px #000;">16.54</span>
<span class="t" style="left:349.34px;top:381px;font-size:16.5px;line-height:18px;letter-spacing:0.863px;color:#000;-webkit-text-stroke:0.08px #000;">29.81</span>
<span class="t" style="left:449.24px;top:381px;font-size:16.5px;line-height:18px;letter-spacing:0.876px;color:#000;-webkit-text-stroke:0.08px #000;">12.8</span>
<span class="t" style="left:529.29px;top:381px;font-size:16.5px;line-height:18px;letter-spacing:0.856px;color:#000;-webkit-text-stroke:0.08px #000;">18.03</span>
<span class="t" style="left:618.98px;top:381px;font-size:16.5px;line-height:18px;letter-spacing:0.870px;color:#000;-webkit-text-stroke:0.08px #000;">28.74</span>
<span class="t" style="left:709.38px;top:381px;font-size:16.5px;line-height:18px;letter-spacing:0.854px;color:#000;-webkit-text-stroke:0.08px #000;">14.27</span>
<span class="t" style="left:40.47px;top:406px;font-size:16.5px;line-height:18px;letter-spacing:0.376px;color:#000;-webkit-text-stroke:0.08px #000;">Y2016</span>
<span class="t" style="left:169.34px;top:406px;font-size:16.5px;line-height:18px;letter-spacing:0.863px;color:#000;-webkit-text-stroke:0.08px #000;">25.67</span>
<span class="t" style="left:259.38px;top:406px;font-size:16.5px;line-height:18px;letter-spacing:0.854px;color:#000;-webkit-text-stroke:0.08px #000;">17.89</span>
<span class="t" style="left:349.32px;top:406px;font-size:16.5px;line-height:18px;letter-spacing:0.868px;color:#000;-webkit-text-stroke:0.08px #000;">32.07</span>
<span class="t" style="left:439.29px;top:406px;font-size:16.5px;line-height:18px;letter-spacing:0.856px;color:#000;-webkit-text-stroke:0.08px #000;">13.05</span>
<span class="t" style="left:529.29px;top:406px;font-size:16.5px;line-height:18px;letter-spacing:0.856px;color:#000;-webkit-text-stroke:0.08px #000;">18.13</span>
<span class="t" style="left:619.25px;top:406px;font-size:16.5px;line-height:18px;letter-spacing:0.865px;color:#000;-webkit-text-stroke:0.08px #000;">22.25</span>
<span class="t" style="left:709.29px;top:406px;font-size:16.5px;line-height:18px;letter-spacing:0.856px;color:#000;-webkit-text-stroke:0.08px #000;">14.78</span>
<div class="b" style="left:126px;top:625px;width:93.00px;height:28.00px;background:transparent;border:2px solid #107c41;box-sizing:border-box;"></div>
<div class="b" style="left:215px;top:649px;width:5.00px;height:5.00px;background:#107c41;border:1px solid #fff;margin:-1px;"></div>
<div class="b" style="left:794.8px;top:227px;width:17.20px;height:476.50px;background:#f6f6f6;border-radius:8.6px;"></div>
<svg class="b" style="left:798px;top:231px" width="11" height="9" viewBox="0 0 11 9"><path d="M5.55 1.6 L9.3 7.2 H1.8 Z" fill="#6e6e6e" stroke="#6e6e6e" stroke-width="1.4" stroke-linejoin="round"/></svg>
<div class="b" style="left:799.4px;top:243.7px;width:8.60px;height:374.70px;background:#717171;border-radius:4.3px;"></div>
<svg class="b" style="left:798px;top:691px" width="11" height="9" viewBox="0 0 11 9"><path d="M5.55 7.2 L9.3 1.8 H1.8 Z" fill="#6e6e6e" stroke="#6e6e6e" stroke-width="1.4" stroke-linejoin="round"/></svg>
<div class="b" style="left:2px;top:702px;width:812.00px;height:31.00px;background:#f0f0f0;"></div>
<div class="b" style="left:117.4px;top:701px;width:57.40px;height:28.20px;background:#fff;border-radius:0 0 5px 5px;box-shadow:0 0.5px 1.5px rgba(0,0,0,0.18);clip-path:inset(1px -4px -4px -4px);"></div>
<div class="b" style="left:117.4px;top:700px;width:57.40px;height:4.00px;background:#fff;"></div>
<div class="b" style="left:111px;top:702px;width:6.40px;height:6.00px;background:#fff;"></div>
<div class="b" style="left:109.4px;top:702px;width:8.00px;height:10.00px;background:#f0f0f0;border-radius:0 6px 0 0;"></div>
<div class="b" style="left:174.8px;top:702px;width:6.20px;height:6.00px;background:#fff;"></div>
<div class="b" style="left:174.8px;top:702px;width:8.20px;height:10.00px;background:#f0f0f0;border-radius:6px 0 0 0;"></div>
<span class="t" style="left:124.72px;top:707px;font-size:13px;line-height:15px;letter-spacing:0.152px;color:#1f1f1f;-webkit-text-stroke:0.45px #1f1f1f;">Sheet1</span>
<div class="b" style="left:125px;top:723.8px;width:41.00px;height:2.20px;background:#107c41;border-radius:1px;"></div>
<div class="b" style="left:177.6px;top:708px;width:1.00px;height:17.40px;background:#c6c6c6;"></div>
<svg class="b" style="left:28px;top:710px" width="9" height="12" viewBox="0 0 9 12"><path d="M7 1.2 L1.8 6 L7 10.8" fill="none" stroke="#a3a3a3" stroke-width="1.2" stroke-linecap="round" stroke-linejoin="round"/></svg>
<svg class="b" style="left:61px;top:710px" width="9" height="12" viewBox="0 0 9 12"><path d="M2 1.2 L7.2 6 L2 10.8" fill="none" stroke="#a3a3a3" stroke-width="1.2" stroke-linecap="round" stroke-linejoin="round"/></svg>
<svg class="b" style="left:220px;top:710px" width="13" height="13" viewBox="0 0 13 13"><path d="M6.5 1 V12 M1 6.5 H12" stroke="#333" stroke-width="1.1"/></svg>
<div class="b" style="left:491px;top:712.6px;width:2.30px;height:2.20px;background:#3a3a3a;border-radius:35%;"></div>
<div class="b" style="left:491px;top:716.6px;width:2.30px;height:2.20px;background:#3a3a3a;border-radius:35%;"></div>
<div class="b" style="left:491px;top:720.5px;width:2.30px;height:2.20px;background:#3a3a3a;border-radius:35%;"></div>
<div class="b" style="left:508.3px;top:707.5px;width:286.70px;height:18.00px;background:#f6f6f6;border-radius:9px;"></div>
<svg class="b" style="left:512px;top:711px" width="9" height="11" viewBox="0 0 9 11"><path d="M1.9 5.5 L7.2 1.8 V9.2 Z" fill="#6e6e6e" stroke="#6e6e6e" stroke-width="1.4" stroke-linejoin="round"/></svg>
<div class="b" style="left:524.8px;top:712px;width:232.70px;height:9.00px;background:#717171;border-radius:4.5px;"></div>
<svg class="b" style="left:782px;top:711px" width="9" height="11" viewBox="0 0 9 11"><path d="M7.4 5.5 L2 1.8 V9.2 Z" fill="#6e6e6e" stroke="#6e6e6e" stroke-width="1.4" stroke-linejoin="round"/></svg>
<div class="b" style="left:1px;top:733.6px;width:813.00px;height:21.40px;background:#f3f3f3;"></div>
<div class="b" style="left:1px;top:732.6px;width:813.00px;height:1.00px;background:#f9f9f9;"></div>
<span class="t" style="left:11.88px;top:739px;font-size:11.5px;line-height:12px;letter-spacing:-0.529px;color:#242424;">Ready</span>
<span class="t" style="left:59.02px;top:739px;font-size:11.5px;line-height:12px;letter-spacing:-0.152px;color:#242424;">Calculate</span>
<svg class="b" style="left:126px;top:738px" width="16" height="14" viewBox="0 0 16 14">
<path d="M5.5 11.5 H0.5 V1.5 H13.5 V4.5 M0.5 3.5 H13.5" fill="none" stroke="#2b2b2b" stroke-width="1"/>
<path d="M2.5 6 H5 M2.5 8.5 H4.2" stroke="#2b2b2b" stroke-width="1"/>
<circle cx="9.6" cy="8.4" r="4" fill="#f3f3f3" stroke="#2b2b2b" stroke-width="1.1"/>
<circle cx="9.6" cy="8.4" r="1.8" fill="#2b2b2b"/>
</svg>
<svg class="b" style="left:157px;top:736.5px" width="17" height="16" viewBox="0 0 17 16">
<circle cx="7" cy="2.3" r="1.6" fill="none" stroke="#2b2b2b" stroke-width="1"/>
<path d="M1.3 3.4 C2.4 4.6 4 5.1 5.3 5.2 C5.4 7.4 4.9 9.4 4.2 10.6 C3.6 11.8 3.2 12.4 3.1 13.1 C3.2 13.8 4.2 13.9 5 13.5 M12.7 3.4 C11.6 4.6 10 5.1 8.7 5.2 C8.6 6.8 8.6 8 8.8 9.5" fill="none" stroke="#2b2b2b" stroke-width="1.1" stroke-linecap="round" stroke-linejoin="round"/>
<path d="M7.2 11.3 L10.1 13.9 L15.6 8.9" fill="none" stroke="#2b2b2b" stroke-width="1.1" stroke-linecap="round" stroke-linejoin="round"/>
</svg>
<span class="t" style="left:176.00px;top:739px;font-size:11.5px;line-height:12px;letter-spacing:0.043px;color:#242424;">Accessibility: Good to go</span>
<div class="b" style="left:503.2px;top:733.6px;width:39.80px;height:21.40px;background:#dedede;"></div>
<svg class="b" style="left:516px;top:737px" width="14" height="14" viewBox="0 0 14 14"><rect x="0.85" y="0.85" width="11.6" height="11.3" fill="none" stroke="#222" stroke-width="1.3"/><path d="M4.7 0.85 V12.1 M8.6 0.85 V12.1 M0.85 4.6 H12.4 M0.85 8.4 H12.4" stroke="#222" stroke-width="1.2"/></svg>
<svg class="b" style="left:556px;top:737px" width="15" height="14" viewBox="0 0 15 14"><rect x="0.7" y="0.85" width="12.7" height="11.3" rx="0.8" fill="none" stroke="#222" stroke-width="1.3"/><rect x="3.9" y="3.6" width="6.3" height="5.9" fill="none" stroke="#222" stroke-width="1"/><path d="M3.9 5.6 H10.2 M3.9 7.5 H10.2" stroke="#222" stroke-width="0.9"/></svg>
<svg class="b" style="left:596px;top:737px" width="15" height="14" viewBox="0 0 15 14"><rect x="0.7" y="0.85" width="12.7" height="11.3" fill="none" stroke="#222" stroke-width="1.3"/><path d="M0.7 7.5 H8.9 V0.85 M4.6 0.85 V7.5" fill="none" stroke="#222" stroke-width="1.1"/></svg>
<div class="b" style="left:629px;top:743.8px;width:7.50px;height:1.00px;background:#333;"></div>
<div class="b" style="left:642.5px;top:743.8px;width:99.00px;height:1.00px;background:#767676;"></div>
<div class="b" style="left:690.4px;top:739px;width:4.60px;height:11.00px;background:#5a5a5a;border-radius:1px;"></div>
<svg class="b" style="left:745.6px;top:739.1px" width="10" height="10" viewBox="0 0 10 10"><path d="M5 1 V9 M1 5 H9" stroke="#2b2b2b" stroke-width="1.1"/></svg>
<span class="t" style="left:767.74px;top:739px;font-size:11.5px;line-height:12px;letter-spacing:-0.692px;color:#242424;">100%</span>
<div id="win"></div>
</body></html>
